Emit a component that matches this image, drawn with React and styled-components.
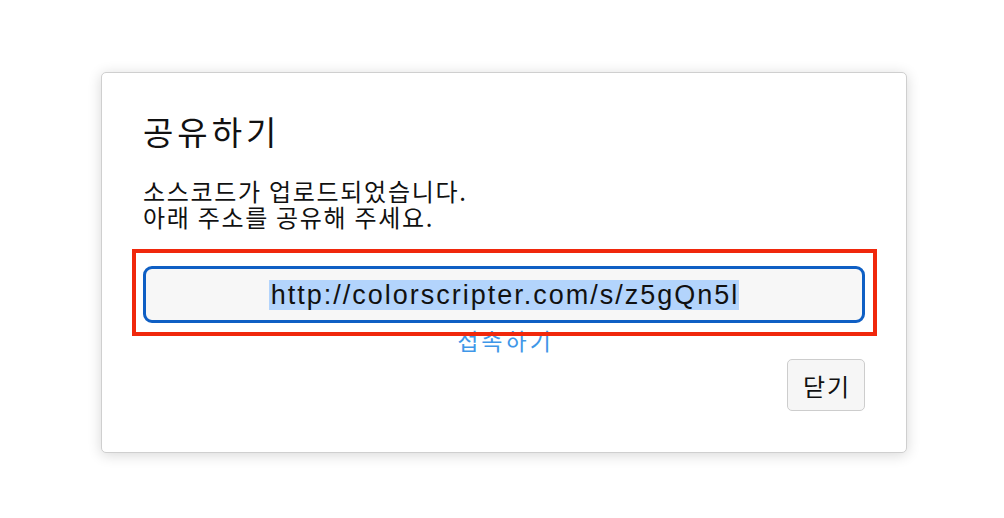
import React from "react";
import styled, { createGlobalStyle } from "styled-components";

const GlobalStyle = createGlobalStyle`
  html, body { margin: 0; padding: 0; background: #ffffff; }
  body { font-family: "Noto Sans CJK KR", "Noto Sans", sans-serif; color: #111; }
`;

const Page = styled.div`
  width: 1004px;
  height: 518px;
  padding: 72px 0 0 101px;
  box-sizing: border-box;
`;

const Dialog = styled.div`
  width: 806px;
  height: 381px;
  box-sizing: border-box;
  background: #fff;
  border: 1px solid #cfcfcf;
  border-radius: 5px;
  box-shadow: 0 2px 14px rgba(0, 0, 0, 0.16);
  padding: 35px 41px 0 41px;
  display: flex;
  flex-direction: column;
`;

const Title = styled.h1`
  margin: 0;
  font-size: 33px;
  line-height: 46px;
  letter-spacing: 4px;
  font-weight: 400;
  color: #111;
`;

const Message = styled.p`
  margin: 24px 0 0 0;
  font-size: 24px;
  line-height: 26px;
  letter-spacing: 1.7px;
  color: #111;
`;

const Highlight = styled.div`
  position: relative;
  margin-top: 36px;
`;

const RedFrame = styled.div`
  position: absolute;
  top: -17px;
  left: -11px;
  right: -12px;
  bottom: -13px;
  border: 4px solid #f0280c;
  pointer-events: none;
  z-index: 2;
`;

const UrlBox = styled.div`
  height: 57px;
  box-sizing: border-box;
  border: 3px solid #0f5fc4;
  border-radius: 9px;
  background: #f7f7f7;
  display: flex;
  align-items: center;
  justify-content: center;
  font-family: "Liberation Sans", Arial, sans-serif;
  font-size: 27px;
  letter-spacing: 2px;
  color: #111;
`;

const Selected = styled.span`
  background: #b3d4fc;
  line-height: 30px;
  padding: 0 0 0 2px;
`;

const LinkRow = styled.div`
  display: flex;
  justify-content: center;
`;

const ConnectLink = styled.a`
  font-size: 23px;
  line-height: 28px;
  letter-spacing: 3px;
  padding-left: 3px;
  color: #3f97e8;
  text-decoration: none;
  margin-top: 3px;
`;

const Footer = styled.div`
  display: flex;
  justify-content: flex-end;
  margin-top: 5px;
`;

const CloseButton = styled.button`
  width: 78px;
  height: 52px;
  box-sizing: border-box;
  border: 1px solid #cdcdcd;
  border-radius: 5px;
  background: #f6f6f6;
  font-family: "Noto Sans CJK KR", sans-serif;
  font-size: 24px;
  letter-spacing: 2px;
  padding: 0 0 0 2px;
  color: #111;
`;

export default function App() {
  return (
    <>
      <GlobalStyle />
      <Page>
        <Dialog>
          <Title>공유하기</Title>
          <Message>
            소스코드가 업로드되었습니다.
            <br />
            아래 주소를 공유해 주세요.
          </Message>
          <Highlight>
            <UrlBox>
              <Selected>http://colorscripter.com/s/z5gQn5l</Selected>
            </UrlBox>
            <RedFrame />
          </Highlight>
          <LinkRow>
            <ConnectLink href="#">접속하기</ConnectLink>
          </LinkRow>
          <Footer>
            <CloseButton>닫기</CloseButton>
          </Footer>
        </Dialog>
      </Page>
    </>
  );
}
